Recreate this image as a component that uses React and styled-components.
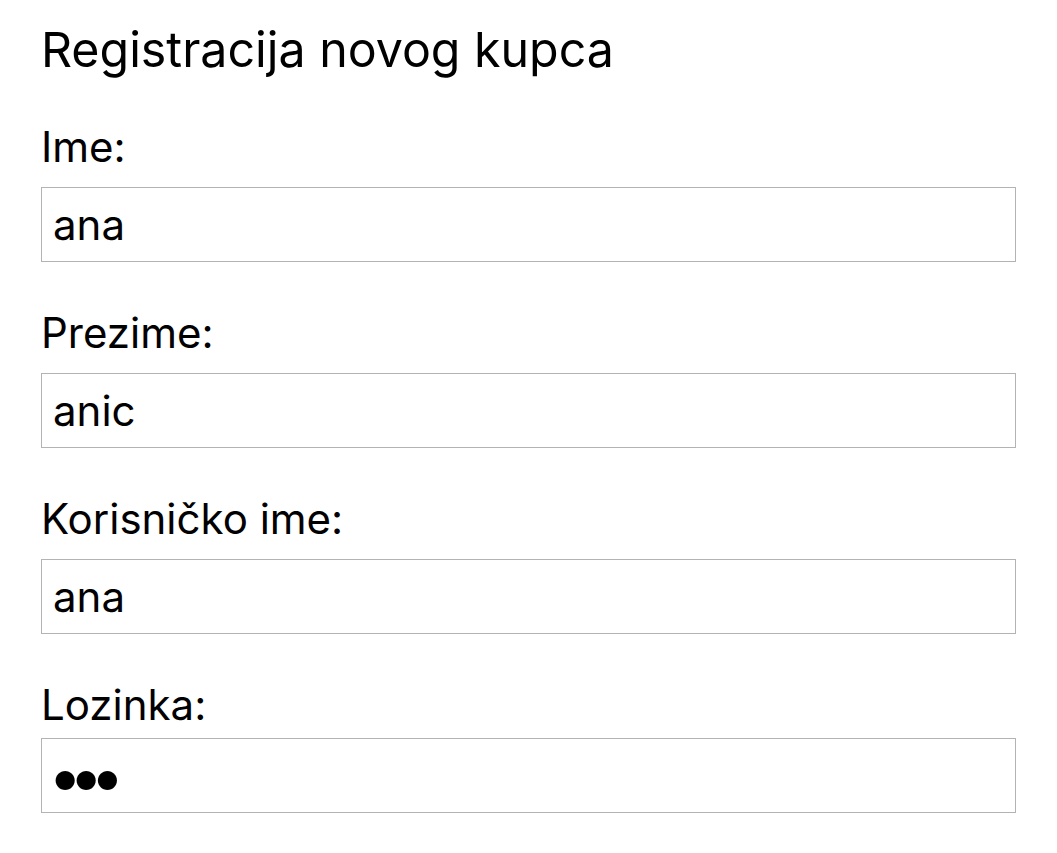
import React from "react";
import styled, { createGlobalStyle } from "styled-components";

const Global = createGlobalStyle`
  html, body { margin: 0; padding: 0; background: #fff; }
  body { font-family: Inter, "Noto Sans", sans-serif; color: #000; }
`;

const Page = styled.form`
  display: flex;
  flex-direction: column;
  padding: 22px 41px 0 41px;
`;

const Title = styled.h3`
  margin: 0 0 45px 0;
  font-size: 48.3px;
  font-weight: 400;
  line-height: 56px;
`;

const Field = styled.div`
  display: flex;
  flex-direction: column;
  margin-bottom: 47px;
`;

const Label = styled.label`
  font-size: 42px;
  line-height: 48px;
  margin-bottom: ${(p) => (p.$tight ? "9px" : "16px")};
`;

const Input = styled.input`
  box-sizing: border-box;
  width: 100%;
  height: 75px;
  margin: 0;
  padding: 0 11px;
  border: 1px solid #b3b3b3;
  border-radius: 0;
  font-family: Inter, "Noto Sans", sans-serif;
  font-size: 42px;
  color: #000;
  background: #fff;
  outline: none;

  &[type="password"] {
    font-size: 61px;
    letter-spacing: -13.2px;
    padding-left: 6px;
  }
`;

const fields = [
  { id: "ime", label: "Ime:", value: "ana" },
  { id: "prezime", label: "Prezime:", value: "anic" },
  { id: "korisnicko", label: "Korisničko ime:", value: "ana" },
  { id: "lozinka", label: "Lozinka:", value: "ana", type: "password", tight: true },
];

export default function App() {
  return (
    <>
      <Global />
      <Page onSubmit={(e) => e.preventDefault()}>
        <Title>Registracija novog kupca</Title>
        {fields.map((f) => (
          <Field key={f.id}>
            <Label htmlFor={f.id} $tight={f.tight}>{f.label}</Label>
            <Input id={f.id} type={f.type || "text"} defaultValue={f.value} />
          </Field>
        ))}
      </Page>
    </>
  );
}
